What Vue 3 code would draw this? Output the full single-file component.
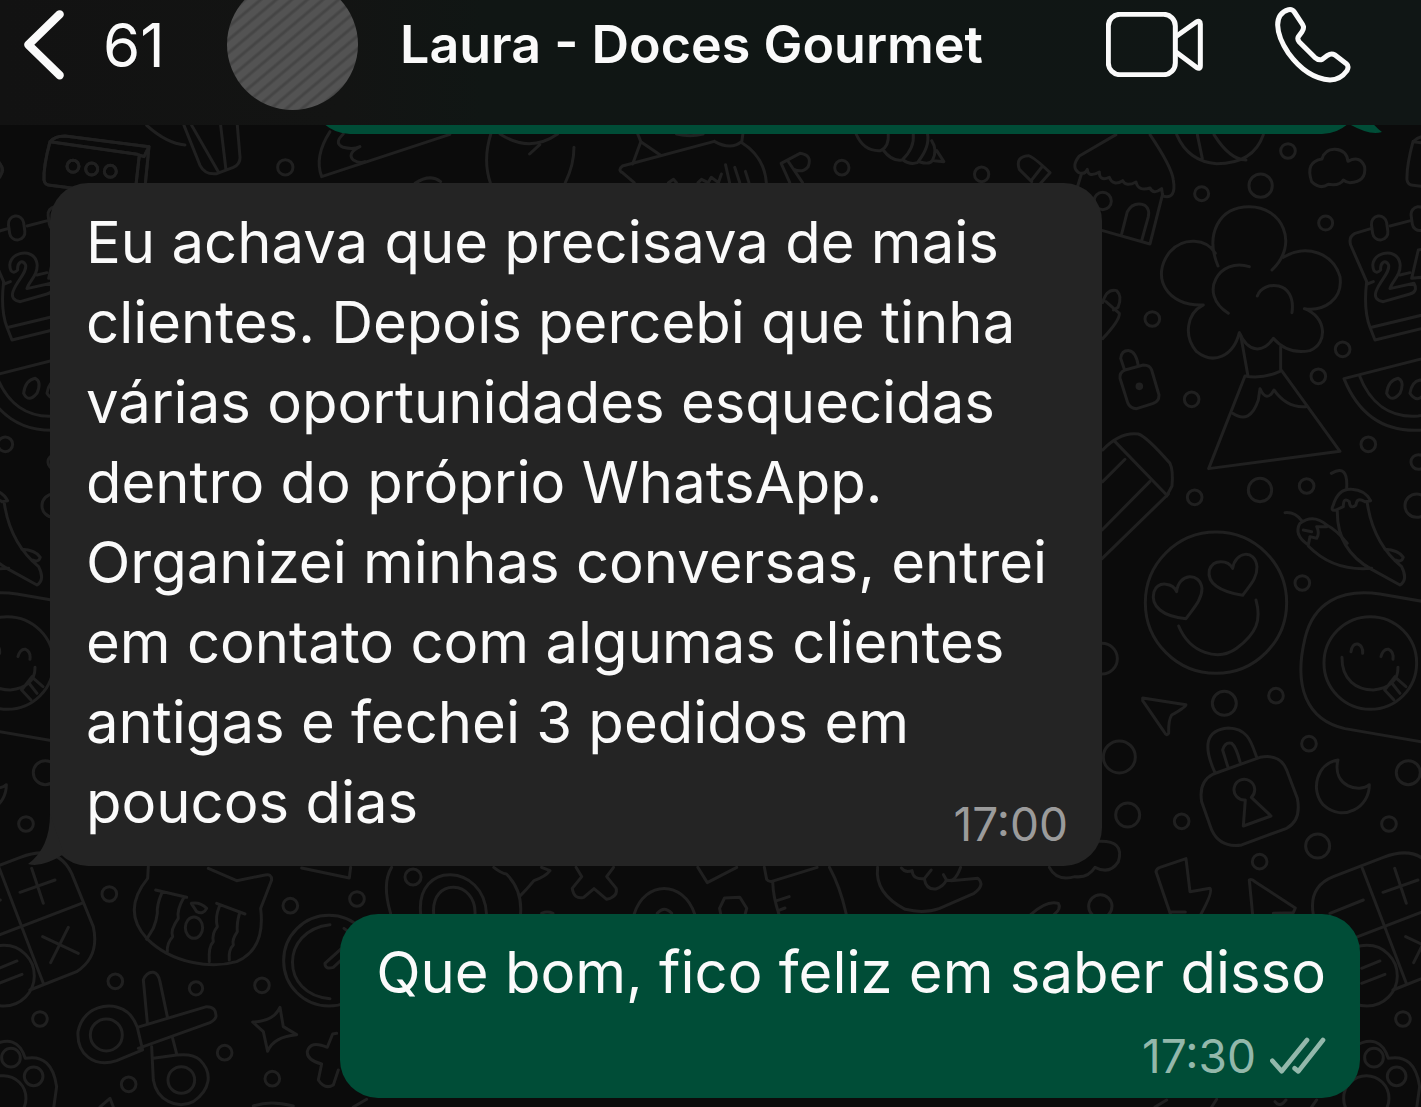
<template>
  <div class="chat">
    <header class="topbar">
      <button class="back" type="button" aria-label="Voltar, 61 conversas">
        <svg class="back-icon" viewBox="70 28 126 210" aria-hidden="true">
          <path d="M180 41 L86 132 L180 224" />
        </svg>
        <span>{{ unread }}</span>
      </button>
      <div class="avatar"></div>
      <h1 class="contact">{{ contact }}</h1>
      <button class="call" type="button" aria-label="Chamada de vídeo">
        <svg class="video-icon" viewBox="319 36 291 195" aria-hidden="true">
          <rect x="326" y="43" width="201" height="181" rx="35" />
          <path d="M530 109 L590 66 Q602 60 602 72 L602 197 Q602 209 590 202 L530 157" />
        </svg>
      </button>
      <button class="call" type="button" aria-label="Chamada de voz">
        <svg class="phone-icon" viewBox="825 20 228 228" aria-hidden="true">
          <path d="M833 74 Q833 38 866 28 Q877 26 883 35 L908 73 Q914 83 906 94 L895 109 Q891 117 898 125 L944 171 Q955 181 967 177 L983 165 Q994 158 1005 164 L1039 190 Q1048 198 1041 211 Q1021 239 990 239 Q920 234 865 158 Q834 112 833 74 Z" />
        </svg>
      </button>
    </header>

    <main class="wall">
      <svg class="doodles" viewBox="0 125 1421 982" preserveAspectRatio="xMidYMin slice" aria-hidden="true">
        <g id="tile">
          <!-- box with three dots, pencils, fan -->
          <g transform="translate(1363 0) scale(.3333)">
            <path d="M150 425 Q130 500 132 540 Q135 555 150 556 L215 564 M150 425 Q165 408 195 408 L447 440 L435 562 M150 425 L412 463 L432 470 L447 440 M418 465 L408 555" />
            <circle cx="219" cy="499" r="18" />
            <circle cx="275" cy="507" r="18" />
            <circle cx="331" cy="514" r="18" />
          </g>
          <g transform="scale(.3333)">
            <path d="M150 425 Q130 500 132 540 Q135 555 150 556 L215 564 M150 425 Q165 408 195 408 L447 440 L435 562 M150 425 L412 463 L432 470 L447 440 M418 465 L408 555" />
            <circle cx="219" cy="499" r="18" />
            <circle cx="275" cy="507" r="18" />
            <circle cx="331" cy="514" r="18" />
            <circle cx="-12" cy="510" r="20" />
            <circle cx="856" cy="502" r="23" />
            <path d="M440 376 Q500 430 555 435 M552 376 L600 496 Q615 525 650 521 L700 502 Q722 492 720 470 L712 376 M575 376 L655 515 M662 376 L678 510" />
            <path d="M990 395 Q942 470 965 530 L1350 403 M1030 402 Q1000 430 1030 442 Q1060 450 1080 440 Q1040 460 1060 480 Q1080 492 1095 485 M1245 550 Q1290 520 1322 545" />
          </g>

          <!-- strip under the bar -->
          <g transform="translate(300 110) scale(.5102 .3333)">
            <path d="M374 72 Q358 150 373 218 M392 72 Q450 130 505 72 M450 132 L470 104 M537 112 Q537 165 520 218" />
            <path d="M662 72 L668 95 L652 162 M668 95 L706 135 M812 94 L632 168 Q622 180 632 188 L655 218 M812 94 Q845 122 866 94 L868 72 M866 98 Q910 140 914 218 M738 72 Q765 82 790 72" />
            <path d="M722 218 L732 208 L738 218 M780 218 L787 208 L800 218 L806 202 L820 218 L826 192 M842 218 L834 164 M862 218 L852 172 M880 218 L873 184" />
            <path d="M960 218 L943 160 L980 130 Q1005 135 996 170 Q985 190 968 178 M955 150 L985 218" />
            <ellipse cx="1062" cy="173" rx="14" ry="22" />
            <ellipse cx="1336" cy="193" rx="14" ry="22" />
            <path d="M1090 72 Q1105 125 1138 122 Q1155 110 1153 72 M1143 120 Q1160 155 1180 150 Q1205 115 1202 72 M1182 150 Q1195 165 1210 158 Q1235 110 1230 72 M1215 156 Q1235 165 1240 150 Q1250 120 1238 92 M1243 152 L1262 155 L1248 122" />
          </g>

          <!-- capsule, house, ball, cloud -->
          <g transform="translate(1000 0) scale(.3333)">
            <path d="M95 545 L58 508 Q45 470 85 467 Q100 470 150 518 L122 550 M128 498 L95 540" />
            <path d="M348 404 L238 468 Q212 500 236 518 Q255 525 262 508 Q265 535 298 516 Q298 545 328 532 Q340 560 368 542 Q378 562 408 546 Q415 575 450 564 Q460 585 485 566 L488 588 Q530 600 520 540 Q515 500 450 404 M245 520 L232 562" />
            <path d="M530 404 Q565 485 650 491 Q760 491 790 404 M592 404 L607 475 M642 404 Q690 480 738 480" />
            <circle cx="308" cy="603" r="26" />
            <circle cx="864" cy="453" r="22" />
            <circle cx="782" cy="557" r="35" />
            <circle cx="605" cy="581" r="21" />
            <path d="M966 477 Q975 447 1005 448 Q1040 450 1044 484 Q1080 465 1094 500 Q1100 545 1050 548 Q1040 548 1030 540 Q1020 558 985 553 Q960 570 935 545 Q915 485 966 477 Z" />
          </g>

          <!-- tree cloud over the volcano, calendar, melon -->
          <g transform="translate(1090 120) scale(.3333)">
            <path d="M218 222 L180 372 L38 332 M95 342 L112 275 Q130 243 165 256 Q180 268 175 290 L155 362" />
            <circle cx="707" cy="309" r="21" />
            <circle cx="187" cy="597" r="22" />
            <circle cx="758" cy="688" r="22" />
            <circle cx="685" cy="769" r="22" />
            <circle cx="305" cy="838" r="22" />
            <circle cx="835" cy="973" r="22" />
            <circle cx="985" cy="1026" r="22" />
            <path d="M384 438 C345 345 385 260 478 260 C575 260 630 370 546 450 M376 400 C350 355 280 350 240 395 C180 470 230 560 340 555 M580 412 C650 370 730 400 750 470 C760 540 700 575 643 566 C710 590 715 670 660 692 C620 700 580 690 550 655 C520 700 475 700 448 638 C430 710 370 735 320 695 C280 650 290 580 338 556" />
            <path d="M478 440 C390 410 320 520 415 580 M502 528 C520 480 620 480 606 578 M452 645 L474 768 M572 680 L572 752 M465 768 Q520 778 575 752 L750 994 L356 1046 Z" />
            <path d="M428 880 Q480 915 505 840 L510 806 Q530 850 552 810 Q590 865 648 860" />
            <path d="M38 548 Q50 505 80 512 Q98 530 84 562 M48 545 L88 580 Q90 600 38 656 M84 562 L70 570" />
            <path d="M102 745 L92 715 Q95 690 118 692 Q138 695 145 737 M105 750 L160 735 Q180 735 185 750 L207 825 Q207 845 190 850 L140 866 Q120 866 113 848 L90 775 Q88 758 105 750 Z" />
            <circle class="dot" cx="148" cy="799" r="7" />
            <path d="M38 990 Q90 935 145 942 Q170 950 240 1030 Q250 1050 246 1098 L230 1128 M75 965 L230 1125 M105 1018 L38 1085" />
            <path d="M845 325 L795 340 Q775 350 782 375 L830 485 Q820 570 840 622 L855 660 L1060 610 M845 622 L1060 570 M900 318 L962 302 M832 492 L850 485 M930 465 L960 458" />
            <rect x="846" y="288" width="46" height="72" rx="23" transform="rotate(-8 869 324)" />
            <rect x="965" y="260" width="46" height="72" rx="23" transform="rotate(-8 988 296)" />
            <path d="M852 452 C830 400 920 375 930 430 C935 465 905 485 900 506 L972 490 Q985 515 960 522 L880 545 Q850 540 858 515 C870 480 900 460 896 435 C885 415 870 430 872 450 Q860 462 852 452 Z" />
            <path d="M1040 380 L985 390 L965 475 L1015 470" />
            <path d="M1100 690 L762 776 C800 870 870 935 985 931 Q1050 925 1100 895 M808 766 C840 850 900 895 985 888 Q1040 880 1080 860" />
            <path d="M890 820 Q895 780 925 775 Q945 785 930 820 Q905 850 890 820 Z M960 820 Q965 785 990 780 Q1015 785 1005 815 Q985 855 960 820 Z" />
          </g>

          <!-- chillies, smileys, padlock, moon -->
          <g transform="translate(1090 480) scale(.3333)">
            <path d="M36 150 L180 4 M36 236 L235 42" />
            <circle cx="314" cy="52" r="22" />
            <circle cx="510" cy="30" r="35" />
            <circle cx="650" cy="18" r="22" />
            <circle cx="980" cy="77" r="35" />
            <circle cx="637" cy="309" r="22" />
            <path d="M724 -20 Q775 -50 770 25 M738 90 Q720 95 730 75 Q745 25 785 28 Q825 30 842 62 L825 65 Q800 50 798 75 Q780 90 778 65 Q760 50 760 80 Z M742 92 Q740 210 845 268 L930 315 Q955 300 935 260 Q850 190 832 70 M885 208 Q925 210 940 232 Q935 248 918 240" />
            <path d="M585 98 Q615 95 635 122 M655 195 Q610 165 630 130 Q670 100 710 135 Q740 150 772 190 M655 195 L660 170 L680 175 Q690 160 680 140 L710 140 M655 198 Q730 275 845 265 M640 150 L665 155" />
            <circle cx="378" cy="368" r="212" />
            <path d="M288 416 C220 410 180 380 192 335 C205 300 250 310 260 335 C265 280 330 275 336 325 C336 360 310 385 288 416 Z M458 346 C390 335 350 310 358 270 C370 235 415 240 428 265 C435 215 495 205 501 260 C502 295 480 315 458 346 Z" />
            <path d="M266 438 C300 520 385 545 440 505 C500 460 515 420 498 360" />
            <path d="M36 490 A46 46 0 0 1 36 582" />
            <path d="M1100 382 L870 342 C750 325 670 370 645 475 C610 620 650 720 765 746 L1090 802" />
            <circle cx="841" cy="549" r="139" />
            <path d="M783 515 Q787 490 803 492 Q820 498 818 520 M873 530 Q880 505 896 508 Q912 515 909 538 M756 532 C755 600 800 630 850 630 C900 625 925 600 924 562 M884 630 L912 660 M918 594 L948 620 M884 630 L915 590 M908 612 L930 640" />
            <path d="M158 654 L288 674 Q290 680 245 705 Q235 720 236 760 Q230 770 222 755 L158 662 Z" />
            <circle cx="403" cy="670" r="36" />
            <circle cx="558" cy="647" r="22" />
            <circle cx="88" cy="831" r="48" />
            <circle cx="657" cy="791" r="22" />
            <circle cx="955" cy="878" r="36" />
            <circle cx="113" cy="1005" r="36" />
            <circle cx="275" cy="1024" r="22" />
            <circle cx="897" cy="1032" r="22" />
            <circle cx="683" cy="1098" r="36" />
            <circle cx="509" cy="1145" r="22" />
            <path d="M374 876 C340 800 345 750 415 744 C475 745 485 790 500 832 M414 862 L398 810 Q405 785 425 790 Q438 800 450 845 M370 882 L510 832 Q570 820 590 870 L622 955 Q635 1020 590 1045 L455 1095 Q390 1105 365 1050 L335 965 Q325 905 370 882 Z" />
            <path d="M466 960 A31 31 0 1 1 484 952 L543 1008 L460 1038 Z" />
            <path d="M744 840 C680 850 660 930 700 975 C760 1030 840 980 838 914 C810 940 725 920 744 840 Z" />
          </g>

          <!-- calculator, paw, bolt -->
          <g transform="translate(1000 780) scale(.3333)">
            <path d="M148 262 Q170 305 225 290 Q265 295 285 262 Q330 285 355 245 Q375 180 295 184" />
            <path d="M92 404 Q140 360 175 370 Q185 385 162 404" />
            <circle cx="301" cy="379" r="35" />
            <path d="M512 404 L468 275 Q470 265 480 262 L558 236 L570 335 L630 325 Q640 335 602 404 M512 396 L556 396" />
            <path d="M758 404 L748 300 Q755 295 765 305 L886 384 L880 398 L820 400" />
            <path d="M940 404 Q925 320 1000 290 L1150 232 Q1260 190 1304 280 L1369 440 Q1389 530 1319 575 L1179 630 M1087 265 L1219 610 M1060 475 L1334 370 M1149 337 L1254 300 M1184 265 L1219 370 M1217 470 L1324 520 M1294 442 L1241 548 M990 400 L1090 360" />
            <circle cx="1101" cy="587" r="91" />
            <path d="M1085 565 L1140 543 M1085 610 L1155 583" />
            <circle cx="1209" cy="717" r="22" />
            <circle cx="1122" cy="833" r="28" />
            <circle cx="1190" cy="889" r="28" />
            <circle cx="1099" cy="955" r="68" />
            <path d="M1060 800 Q1140 755 1165 835 Q1245 820 1259 920 L1250 985 M465 981 L500 960 M635 981 L650 958 M825 965 Q840 985 858 960 M935 981 L950 960" />
          </g>

          <!-- crying cat, scissors, gauge, stars -->
          <g transform="translate(0 840) scale(.3333)">
            <path d="M445 80 L443 115 C390 180 390 240 440 295 C520 375 640 385 710 365 C780 335 790 270 782 205 Q790 185 815 120 Q815 100 795 105 L710 122 L625 85" />
            <path d="M467 150 L560 172 M485 160 Q470 195 472 220 Q470 240 460 265 L440 298 M552 172 Q530 210 535 235 Q510 270 518 290 Q500 310 502 335 M650 190 L735 222 M658 200 Q645 230 652 260 Q635 280 640 305 Q625 320 628 365 M718 222 Q710 250 712 275 Q695 300 700 315 Q685 330 688 360 M574 190 Q600 185 620 205 Q610 225 590 215 Z" />
            <ellipse cx="582" cy="263" rx="26" ry="32" />
            <path d="M905 84 L1048 114 L1052 82 M1175 82 Q1145 130 1172 220" />
            <circle cx="328" cy="162" r="22" />
            <circle cx="871" cy="197" r="22" />
            <circle cx="1071" cy="177" r="22" />
            <circle cx="346" cy="424" r="22" />
            <circle cx="588" cy="445" r="20" />
            <circle cx="786" cy="436" r="22" />
            <circle cx="674" cy="638" r="22" />
            <circle cx="386" cy="733" r="22" />
            <circle cx="817" cy="716" r="22" />
            <circle cx="987" cy="362" r="136" />
            <path d="M990 254 C840 270 840 465 990 476 M1025 325 L975 370 Q975 390 1000 382 L1040 345 M1032 265 L1045 275" />
            <path d="M442 548 L430 420 Q440 395 460 397 Q475 400 480 425 L502 530 M412 562 L620 500 Q650 500 648 530 Q645 540 630 548 L415 625 M412 562 L428 630 L350 662 C280 685 230 640 234 575 C250 500 330 480 380 515 Q400 530 412 562 M455 620 L460 720 C470 780 530 810 580 785 C630 750 640 700 600 660 Q580 640 530 645 L460 655 M518 595 L530 642" />
            <circle cx="319" cy="585" r="48" />
            <circle cx="544" cy="720" r="40" />
            <path d="M840 502 L850 560 L890 584 Q820 590 803 634 L790 575 L758 546 Q820 545 840 502 Z M1010 580 L998 582 L982 622 Q930 600 922 635 Q920 660 965 672 L955 720 Q975 750 1000 735 L1015 690 M300 801 L330 775 L340 801 M760 798 Q810 780 880 798 M1060 801 L1100 778" />
          </g>

          <g transform="translate(400 840) scale(.3827 .3333)">
            <ellipse cx="34" cy="111" rx="21" ry="24" />
            <path d="M54 222 C40 60 220 70 226 222 M88 222 C80 110 200 120 196 222 M245 82 Q265 100 278 102 Q320 150 315 222 M370 82 L392 92 Q380 110 350 122 Q330 150 312 170" />
            <path d="M460 82 L475 110 L450 145 Q455 180 480 172 L507 146 L540 178 Q570 170 565 145 L540 110 L558 82 M370 220 Q385 212 400 220" />
            <path d="M612 222 C640 120 740 120 770 222 M672 220 Q690 195 710 220 M778 82 L803 128 L880 82 M835 205 L848 174 L888 172 L906 205 L902 222 M835 205 L838 222" />
            <path d="M952 82 L958 118 Q965 128 978 122 L1090 82 M974 128 Q975 170 990 222 M985 182 L1017 170 M988 212 L1006 204 M1122 82 Q1150 140 1166 222" />
            <path d="M1248 82 Q1240 160 1320 208 Q1370 222 1410 205 L1500 160 Q1530 135 1510 115 Q1480 118 1440 122 M1310 84 Q1320 100 1338 92 Q1340 120 1370 116 Q1375 150 1400 147 Q1420 140 1428 120 Q1450 130 1465 82 M1370 116 L1388 90 M1428 120 L1420 104" />
          </g>
        </g>
        <use href="#tile" x="-1363" />
      </svg>

      <div class="earlier">
        <div class="bubble sent earlier-bubble">
          <svg class="tail" viewBox="0 0 36 52" aria-hidden="true">
            <path d="M22 0 Q22 34 0 50 Q14 54 36 40 Z" />
          </svg>
        </div>
      </div>

      <div class="messages">
        <article v-for="m in messages" :key="m.time" class="bubble" :class="m.from">
          <span class="text">{{ m.text }}</span>
          <div class="meta">
            <time>{{ m.time }}</time>
            <svg v-if="m.read" class="ticks" viewBox="818 767 168 114" aria-label="Lida">
              <path d="M825 838 L853 870 L929 776 M892 861 L903 870 L977 776" />
            </svg>
          </div>
          <svg v-if="m.from === 'received'" class="tail" viewBox="0 0 36 52" aria-hidden="true">
            <path d="M22 0 Q22 34 0 50 Q14 54 36 40 Z" />
          </svg>
        </article>
      </div>
    </main>
  </div>
</template>

<script setup>
import { ref } from 'vue'

const unread = ref(61)
const contact = ref('Laura - Doces Gourmet')

const messages = ref([
  {
    from: 'received',
    text: 'Eu achava que precisava de mais clientes. Depois percebi que tinha várias oportunidades esquecidas dentro do próprio WhatsApp. Organizei minhas conversas, entrei em contato com algumas clientes antigas e fechei 3 pedidos em poucos dias',
    time: '17:00'
  },
  {
    from: 'sent',
    text: 'Que bom, fico feliz em saber disso',
    time: '17:30',
    read: true
  }
])
</script>

<style>
body {
  background: #0b0b0b;
}
</style>

<style scoped>
.chat {
  display: flex;
  flex-direction: column;
  min-height: 100vh;
  background: #0b0b0b;
  color: #fafafa;
  font-family: Inter, "Liberation Sans", sans-serif;
}

.topbar {
  display: flex;
  align-items: center;
  box-sizing: border-box;
  height: 125px;
  padding: 0 70px 36px 23px;
  overflow: hidden;
  background: linear-gradient(90deg, #121212, #131413 24%, #101614 34%, #101615);
}

button {
  display: flex;
  align-items: center;
  flex: none;
  padding: 0;
  border: none;
  background: none;
  color: inherit;
  font: inherit;
  cursor: pointer;
}

.topbar svg {
  display: block;
  fill: none;
  stroke: #fafafa;
  stroke-linecap: round;
  stroke-linejoin: round;
}

.back {
  gap: 38px;
  width: 204px;
  font-size: 60px;
}

.back-icon {
  width: 42px;
  height: 70px;
  stroke-width: 25;
}

.avatar {
  flex: none;
  width: 131px;
  height: 131px;
  border-radius: 50%;
  background: repeating-linear-gradient(140deg, #535353 0, #535353 5px, #454545 7px, #454545 8px, #535353 10px);
}

.contact {
  flex: 1;
  margin: 0 0 0 42px;
  font-size: 52px;
  font-weight: 600;
  white-space: nowrap;
}

.call + .call {
  margin-left: 72px;
}

.video-icon {
  width: 97px;
  height: 65px;
  stroke-width: 15;
}

.phone-icon {
  width: 76px;
  height: 76px;
  stroke-width: 15;
}

.wall {
  position: relative;
  flex: 1;
  overflow: hidden;
}

.doodles {
  position: absolute;
  inset: 0;
  width: 100%;
  height: 100%;
  fill: none;
  stroke: #202020;
  stroke-linecap: round;
  stroke-linejoin: round;
}

.doodles path,
.doodles circle,
.doodles ellipse,
.doodles rect {
  stroke-width: 3px;
  vector-effect: non-scaling-stroke;
}

.doodles .dot {
  fill: #202020;
}

/* only the bottom edge of the previous message shows under the bar */
.earlier {
  position: relative;
  display: flex;
  flex-direction: column;
  justify-content: flex-end;
  height: 9px;
  padding: 0 61px 0 312px;
  overflow: hidden;
}

.messages {
  position: relative;
  display: flex;
  flex-direction: column;
  gap: 48px;
  padding: 49px 61px 9px 50px;
}

.bubble {
  position: relative;
  display: flow-root;
  box-sizing: border-box;
  padding: 18px 34px 20px 36px;
  border-radius: 38px;
}

.received {
  margin-right: 258px;
  padding-top: 19px;
  background: #242424;
}

.sent {
  align-self: flex-end;
  background: #004d37;
}

.earlier-bubble {
  flex: none;
  align-self: stretch;
  height: 80px;
}

.text {
  font-size: 58px;
  line-height: 80px;
}

.sent .text {
  display: block;
}

.meta {
  display: flex;
  float: right;
  align-items: center;
  gap: 14px;
  height: 44px;
  font-size: 46px;
  line-height: 44px;
}

.received .meta {
  margin-top: 40px;
  color: #9b9b9b;
}

.sent .meta {
  margin-top: 22px;
  color: #93b8ab;
}

.ticks {
  width: 56px;
  height: 38px;
  fill: none;
  stroke: currentColor;
  stroke-width: 14;
  stroke-linecap: round;
  stroke-linejoin: round;
}

.tail {
  position: absolute;
  bottom: 0;
  width: 36px;
  height: 52px;
}

.received .tail {
  left: -22px;
  fill: #242424;
}

.sent .tail {
  right: -22px;
  fill: #004d37;
  transform: scaleX(-1);
}
</style>
